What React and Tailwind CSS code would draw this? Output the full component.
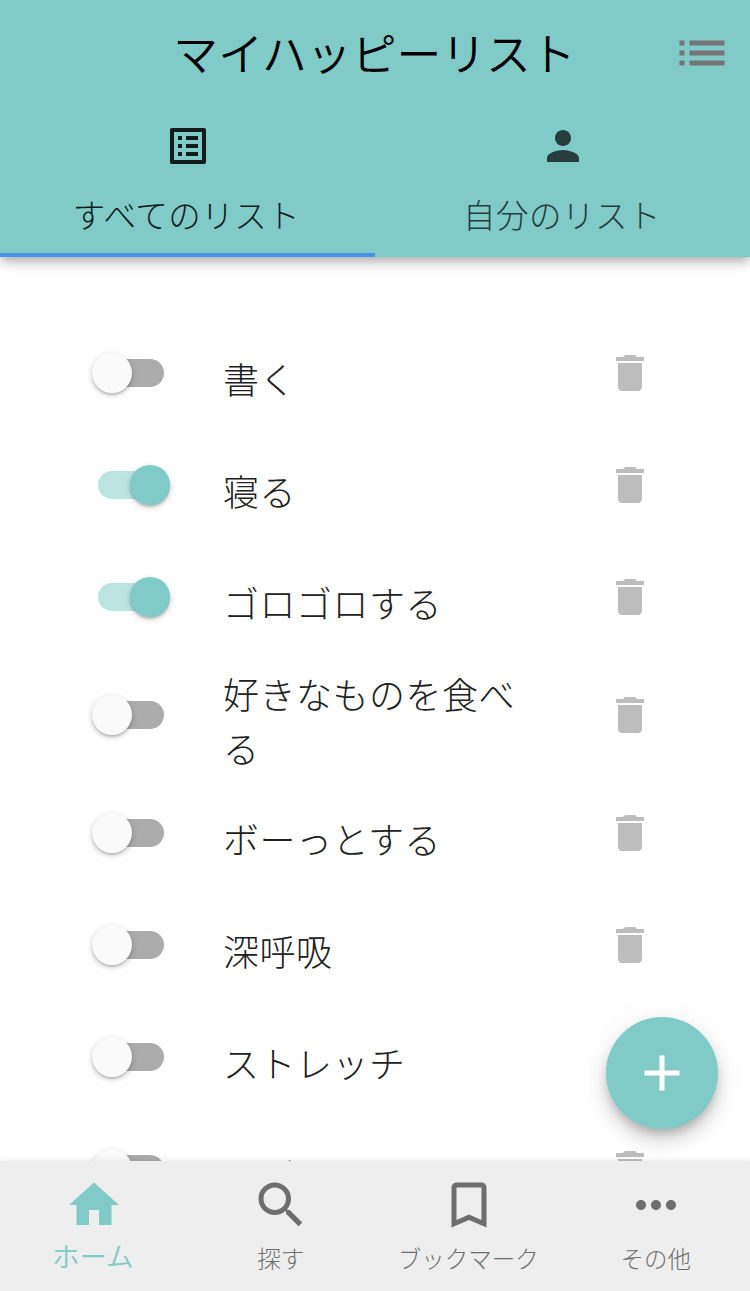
import {
  MdList, MdListAlt, MdPerson, MdDelete, MdAdd, MdHome, MdSearch, MdBookmarkBorder, MdMoreHoriz,
} from 'react-icons/md';

const items = [
  { label: '書く', on: false },
  { label: '寝る', on: true },
  { label: 'ゴロゴロする', on: true },
  { label: '好きなものを食べる', on: false, tall: true },
  { label: 'ボーっとする', on: false },
  { label: '深呼吸', on: false },
  { label: 'ストレッチ', on: false },
  { label: 'ヨガ', on: false },
];

function Toggle({ on }) {
  return on ? (
    <div className="ml-[98px] flex h-10 w-[72px] shrink-0 items-center">
      <div className="h-7 w-[68px] shrink-0 rounded-full bg-[#bce5e2]" />
      <div className="relative -ml-9 size-10 shrink-0 rounded-full bg-[#80cbc8] shadow-[0_2px_2px_rgba(0,0,0,0.14),0_2px_6px_rgba(0,0,0,0.2)]" />
    </div>
  ) : (
    <div className="ml-[92px] flex h-10 w-[72px] shrink-0 items-center">
      <div className="relative size-10 shrink-0 rounded-full bg-[#fafafa] shadow-[0_2px_2px_rgba(0,0,0,0.14),0_2px_6px_rgba(0,0,0,0.2)]" />
      <div className="-ml-9 h-7 w-[68px] shrink-0 rounded-full bg-[#acacac]" />
    </div>
  );
}

function Row({ item }) {
  return (
    <li className={`flex shrink-0 items-center ${item.tall ? 'h-[124px]' : 'h-[112px]'}`}>
      <div className="w-[223px] shrink-0">
        <Toggle on={item.on} />
      </div>
      <p className="w-[300px] pt-[10px] text-[36px] leading-[54px] font-light tracking-[0.5px] text-[#212121]">
        {item.label}
      </p>
      <MdDelete className="ml-[83px] size-12 shrink-0 text-[#bdbdbd]" />
    </li>
  );
}

function NavItem({ Icon, label, active }) {
  return (
    <button className={`flex flex-1 flex-col items-center pt-[14px] whitespace-nowrap ${active ? 'text-[#80cbc8]' : 'text-[#6e6e6e]'}`}>
      <Icon className="size-[60px] shrink-0" />
      <span className={active ? 'mr-[2px] text-[27.5px] leading-[40px] font-[350]' : 'mt-[5px] mr-px text-[23.5px] leading-[36px] font-light'}>
        {label}
      </span>
    </button>
  );
}

export default function App() {
  return (
    <div className="relative flex h-[1291px] w-[750px] flex-col overflow-hidden bg-white font-['Noto_Sans_CJK_JP',sans-serif]">
      <header className="relative z-10 flex h-[257px] shrink-0 flex-col bg-[#80cbc8] shadow-[0_4px_8px_-2px_rgba(0,0,0,0.2),0_8px_10px_rgba(0,0,0,0.12),0_2px_20px_rgba(0,0,0,0.06)]">
        <div className="grid h-[106px] grid-cols-[96px_1fr_96px] items-center">
          <span />
          <h1 className="-mt-[3px] mr-px text-center text-[44.8px] leading-[64px] font-[350] whitespace-nowrap text-black">マイハッピーリスト</h1>
          <MdList className="ml-[18px] size-[60px] text-[#757575]" />
        </div>
        <nav className="flex flex-1">
          <button className="flex flex-1 flex-col items-center border-b-4 border-[#4892ec] pt-4 text-[#111c1b]">
            <MdListAlt className="size-12" />
            <span className="mt-5 mr-[2px] text-[32.5px] leading-[48px] font-light tracking-[0.5px]">すべてのリスト</span>
          </button>
          <button className="flex flex-1 flex-col items-center pt-4 text-[#263d3c]">
            <MdPerson className="size-12" />
            <span className="mt-5 mr-px text-[32.5px] leading-[48px] font-light tracking-[0.5px]">自分のリスト</span>
          </button>
        </nav>
      </header>

      <main className="min-h-0 flex-1 overflow-hidden pt-[60px]">
        <ul className="flex flex-col">
          {items.map((item) => <Row key={item.label} item={item} />)}
        </ul>
      </main>

      <button aria-label="追加" className="absolute top-[1017px] left-[606px] flex size-28 items-center justify-center rounded-full bg-[#80cbc8] text-white shadow-[0_6px_10px_-2px_rgba(0,0,0,0.2),0_12px_20px_rgba(0,0,0,0.14),0_2px_36px_rgba(0,0,0,0.06)]">
        <MdAdd className="size-[60px]" />
      </button>

      <footer className="relative flex h-[130px] shrink-0 bg-[#eeeeee] shadow-[0_-1px_6px_rgba(0,0,0,0.08)]">
        <NavItem Icon={MdHome} label="ホーム" active />
        <NavItem Icon={MdSearch} label="探す" />
        <NavItem Icon={MdBookmarkBorder} label="ブックマーク" />
        <NavItem Icon={MdMoreHoriz} label="その他" />
      </footer>
    </div>
  );
}
